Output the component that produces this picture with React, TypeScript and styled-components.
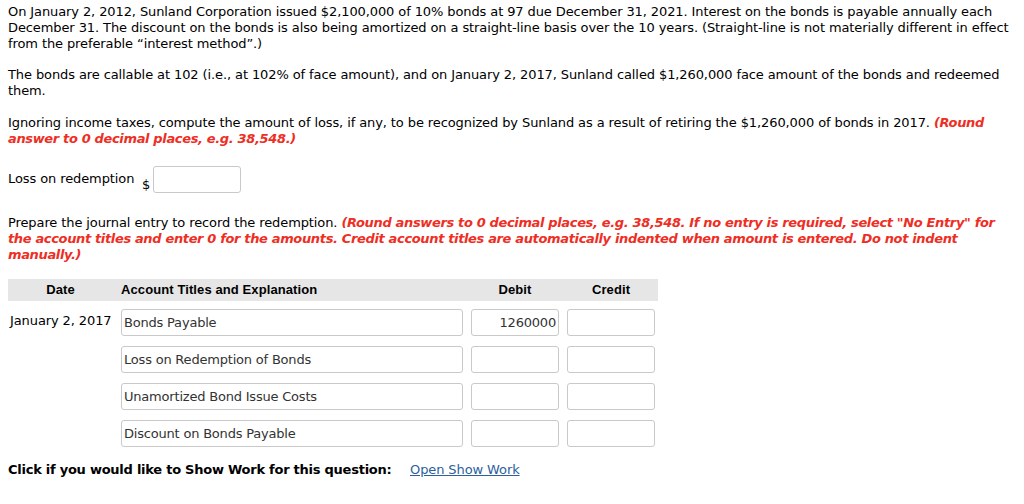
import React from 'react';
import styled, { createGlobalStyle } from 'styled-components';

const GlobalStyle = createGlobalStyle`
  body {
    margin: 0;
    background: #fff;
    font-family: "DejaVu Sans", Verdana, sans-serif;
    font-size: 13px;
    color: #000;
  }
`;

const Page = styled.div`
  padding: 4px 8px 0 8px;
  line-height: 16px;
  letter-spacing: -0.1px;
`;

const Para = styled.p<{ gap?: number }>`
  margin: 0 0 ${p => p.gap ?? 15}px 0;
  font-size: 13px;
`;

const Red = styled.span`
  color: #ee2e24;
  font-weight: bold;
  font-style: italic;
  letter-spacing: -0.35px;
`;

const AnswerRow = styled.div`
  display: flex;
  align-items: flex-end;
  height: 27px;
  margin-bottom: 22px;
`;

const AnswerLabel = styled.span`
  align-self: flex-start;
  margin-top: 5px;
  width: 134px;
  white-space: nowrap;
`;

const Dollar = styled.span`
  margin-right: 3px;
`;

const Field = styled.div<{ w: number; right?: boolean }>`
  box-sizing: border-box;
  width: ${p => p.w}px;
  height: 27px;
  border: 1px solid #c9c9c9;
  border-radius: 3px;
  background: #fff;
  color: #333;
  font-size: 13px;
  line-height: 25px;
  padding: 0 2px;
  letter-spacing: -0.2px;
  text-align: ${p => (p.right ? 'right' : 'left')};
  white-space: nowrap;
  overflow: hidden;
`;

const cols = '105px 342px 88px 88px';

const Journal = styled.div`
  width: 650px;
  display: grid;
  grid-template-columns: ${cols};
  column-gap: 8px;
  row-gap: 10px;
`;

const HeadRow = styled.div`
  grid-column: 1 / -1;
  display: grid;
  grid-template-columns: ${cols};
  column-gap: 8px;
  width: 650px;
  height: 22px;
  align-items: center;
  background: #e6e6e6;
  margin-bottom: -2px;
  font-family: "Liberation Sans", Arial, sans-serif;
  font-weight: bold;
  font-size: 13px;
  letter-spacing: 0.1px;
`;

const HeadCell = styled.div<{ align?: string }>`
  text-align: ${p => p.align ?? 'center'};
`;

const DateCell = styled.div`
  margin-left: 2px;
  padding-top: 4px;
  white-space: nowrap;
`;

const Footer = styled.div`
  margin-top: 15px;
  display: flex;
  align-items: center;
`;

const FooterLabel = styled.span`
  font-weight: bold;
  width: 402px;
  white-space: nowrap;
  letter-spacing: -0.25px;
`;

const Link = styled.a`
  color: #2e5f9d;
  text-decoration: underline;
  cursor: pointer;
`;

const rows = [
  { date: 'January 2, 2017', account: 'Bonds Payable', debit: '1260000', credit: '' },
  { date: '', account: 'Loss on Redemption of Bonds', debit: '', credit: '' },
  { date: '', account: 'Unamortized Bond Issue Costs', debit: '', credit: '' },
  { date: '', account: 'Discount on Bonds Payable', debit: '', credit: '' },
];

export default function App() {
  return (
    <Page>
      <GlobalStyle />
      <Para>
        On January 2, 2012, Sunland Corporation issued $2,100,000 of 10% bonds at 97 due December 31, 2021. Interest on the bonds is payable annually each
        December 31. The discount on the bonds is also being amortized on a straight-line basis over the 10 years. (Straight-line is not materially different in effect
        from the preferable “interest method”.)
      </Para>
      <Para gap={16}>
        The bonds are callable at 102 (i.e., at 102% of face amount), and on January 2, 2017, Sunland called $1,260,000 face amount of the bonds and redeemed
        them.
      </Para>
      <Para gap={19}>
        Ignoring income taxes, compute the amount of loss, if any, to be recognized by Sunland as a result of retiring the $1,260,000 of bonds in 2017.{' '}
        <Red>(Round answer to 0 decimal places, e.g. 38,548.)</Red>
      </Para>
      <AnswerRow>
        <AnswerLabel>Loss on redemption</AnswerLabel>
        <Dollar>$</Dollar>
        <Field w={88} />
      </AnswerRow>
      <Para gap={16}>
        Prepare the journal entry to record the redemption.{' '}
        <Red>
          (Round answers to 0 decimal places, e.g. 38,548. If no entry is required, select "No Entry" for the account titles and enter 0 for the amounts. Credit account titles are automatically indented when amount is entered. Do not indent manually.)
        </Red>
      </Para>
      <Journal>
        <HeadRow>
          <HeadCell>Date</HeadCell>
          <HeadCell align="left">Account Titles and Explanation</HeadCell>
          <HeadCell>Debit</HeadCell>
          <HeadCell>Credit</HeadCell>
        </HeadRow>
        {rows.map((r, i) => (
          <React.Fragment key={i}>
            <DateCell>{r.date}</DateCell>
            <Field w={342}>{r.account}</Field>
            <Field w={88} right>{r.debit}</Field>
            <Field w={88} right>{r.credit}</Field>
          </React.Fragment>
        ))}
      </Journal>
      <Footer>
        <FooterLabel>Click if you would like to Show Work for this question:</FooterLabel>
        <Link>Open Show Work</Link>
      </Footer>
    </Page>
  );
}
